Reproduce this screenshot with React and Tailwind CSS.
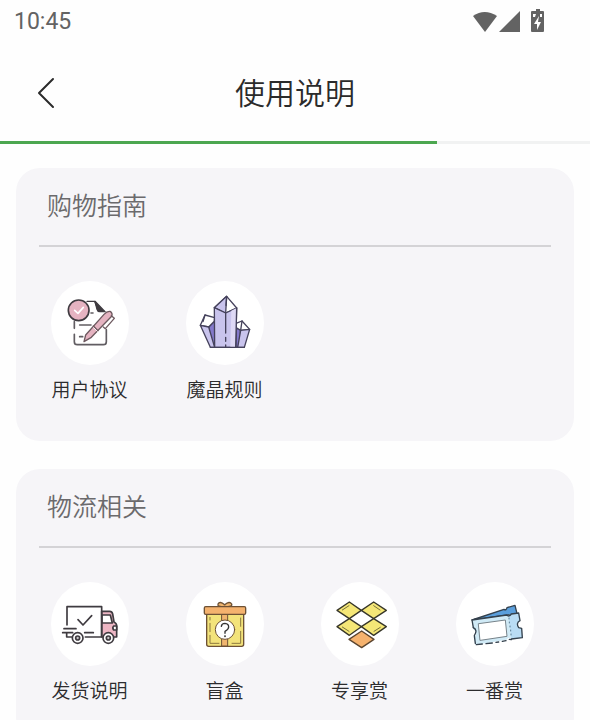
const INK = '#3f3b40';

function AgreementIcon() {
  return (
    <g fill="none" stroke={INK} strokeWidth="5" strokeLinecap="round" strokeLinejoin="round">
      <path d="M126 79h23l12 30h18" strokeWidth="4" />
      <path d="M150 79l30 31h-16q-6 0-8-7z" fill={INK} strokeWidth="4" />
      <path d="M88 140v20M88 178v22q0 9 9 9h78q9 0 9-9v-36" stroke="#615d62" />
      <path d="M138 114h6M104 150h34M104 185h9" stroke="#615d62" />
      <circle cx="101" cy="106" r="31" fill="#e5b3c1" />
      <path d="M89 106l10 9 16-18" stroke="#fff" />
      <path d="M117 200l5-20 55-62q9-10 18-9 9 5 5 15l-61 63z" fill="#e5b3c1" stroke="#6e5a60" strokeWidth="4" />
      <path d="M145 153l14 14M199 122l9 8-27 31-6-5" stroke="#6e5a60" strokeWidth="4" />
      <path d="M146 158l11 11" stroke="#f6edef" strokeWidth="3" />
    </g>
  );
}

function CrystalIcon() {
  return (
    <g stroke="#45425c" strokeWidth="4" strokeLinejoin="round" strokeLinecap="round">
      <path d="M86 156l18-18v79l-11-8zM167 165l14-12v50l-7 14h-7z" fill="#8479cb" />
      <path d="M61 151l14-31 29 8-1 11-17 17z" fill="#fff" />
      <path d="M61 151l25 5 18 61H91z" fill="#c9c4ed" />
      <path d="M168 145l18-7 23 25-27 3-14-8z" fill="#fff" />
      <path d="M182 166l27-3-16 54h-20z" fill="#c9c4ed" />
      <path d="M103 98l37-34 30 35-33 15z" fill="#fff" />
      <path d="M103 98l37-34-3 50z" fill="#c9c4ed" />
      <path d="M103 98l34 16 33-15-3 118h-63z" fill="#c9c4ed" />
      <path d="M154 107l16-8-3 118h-16z" fill="#ded9f5" stroke="none" />
      <path d="M137 114v60M137 187v12M137 210v7M140 64l-2 27M170 99l-3 118M91 217h102M75 120l-6 20M186 138l-4 28" fill="none" />
    </g>
  );
}

function TruckIcon() {
  return (
    <g fill="none" stroke={INK} strokeWidth="5" strokeLinecap="round" strokeLinejoin="round">
      <path d="M170 106h24q7 0 9 8l4 24q8 4 8 12v33h-45z" fill="#edb6c4" />
      <path d="M171 117h25l6 24h-31z" fill="#fff" />
      <path d="M66 147V92h104v91h-49M119 170h26" />
      <path d="M99 131l15 16 26-28" />
      <path d="M57 158h36M53 170h30M65 170v13h16" />
      <path d="M215 150h-9q-5 5 0 12h9z" fill="#fff" />
      <circle cx="98" cy="186" r="16" fill="#fff" />
      <circle cx="98" cy="186" r="6" fill="#c9c7c9" />
      <circle cx="190" cy="186" r="16" fill="#fff" />
      <circle cx="190" cy="186" r="6" fill="#c9c7c9" />
    </g>
  );
}

function GiftIcon() {
  return (
    <g fill="none" stroke="#6d5135" strokeWidth="4" strokeLinecap="round" strokeLinejoin="round">
      <path d="M134 91q-23 3-20-7 5-10 20 2 15-12 21-2 3 10-21 7z" fill="#f0b56f" />
      <path d="M80 114h111v91q0 6-6 6H86q-6 0-6-6z" fill="#f3e37b" />
      <path d="M126 115h17v95h-17z" fill="#f0b56f" strokeWidth="3" />
      <rect x="73" y="92" width="124" height="23" rx="4" fill="#f4b26e" />
      <path d="M90 124v8M90 142v25M90 178v24h27M182 126v25M182 166v36h-26" stroke="#8d793f" strokeWidth="3" />
      <circle cx="135" cy="161" r="29" fill="#fff" strokeWidth="3" />
      <path d="M124 151q1-9 11-9 11 1 11 11 0 7-11 13v6" stroke="#333" />
      <circle cx="135" cy="181" r="1" fill="#333" stroke="#333" />
    </g>
  );
}

function BoxesIcon() {
  return (
    <g fill="#f5e777" stroke="#373629" strokeWidth="4" strokeLinejoin="round" strokeLinecap="round">
      <path d="M66 103l37-25 36 25-36 25z" />
      <path d="M139 103l37-25 38 25-38 25z" />
      <path d="M66 152l37-24 36 24-36 26z" />
      <path d="M139 152l37-24 38 24-38 26z" />
      <path d="M102 190l38-25 37 25-37 25z" fill="#f5b26e" stroke="#5b452f" />
      <path d="M82 102l20-13M176 89l19 13M82 153l20 13M177 166l19-12" fill="none" stroke="#77703b" strokeWidth="3" />
    </g>
  );
}

function TicketIcon() {
  return (
    <g stroke="#34414d" strokeWidth="4" strokeLinejoin="round" strokeLinecap="round">
      <path d="M66 132l96-32q7 4 9-5l24-7 6 25-70 10z" fill="#5b9fdc" />
      <path d="M66 132l104-15q7 7 14-3l22-3 4 23q-13 7-4 21l9 2 2 28-33 4q-7-8-14 2l-94 16-5-23q14-9 3-21l-5-4z" fill="#d0eaf6" stroke="none" />
      <path d="M176 117l8-3 22-3 4 23q-13 7-4 21l9 2 2 28-33 4z" fill="#b9dcf4" stroke="none" />
      <path d="M70 155l-4-23 104-15q7 7 14-3l22-3 4 23q-13 7-4 21l9 2 2 28-33 4" fill="none" />
      <path d="M70 155q14 7 3 24l3 23M79 206l18-2M108 203l19-2M138 199l8-1M157 196l11-2M178 190l6 1" fill="none" />
      <path d="M86 143l80-11 5 49-80 12z" fill="#fff" stroke="#77838a" strokeWidth="3" />
      <path d="M177 126v3M178 138v3M180 150v3M182 162v3M183 174v3" fill="none" stroke="#5b7c93" strokeWidth="3" />
    </g>
  );
}

const SECTIONS = [
  {
    title: '购物指南',
    items: [
      { label: '用户协议', Icon: AgreementIcon },
      { label: '魔晶规则', Icon: CrystalIcon },
    ],
  },
  {
    title: '物流相关',
    items: [
      { label: '发货说明', Icon: TruckIcon },
      { label: '盲盒', Icon: GiftIcon },
      { label: '专享赏', Icon: BoxesIcon },
      { label: '一番赏', Icon: TicketIcon },
    ],
  },
];

function StatusBar() {
  return (
    <div className="flex h-11 items-center justify-between pl-3.5 pr-11 text-[#636363]">
      <span className="font-[Roboto] text-[23px]">10:45</span>
      <svg width="74" height="26" viewBox="0 0 74 26" fill="currentColor" aria-hidden="true">
        <path d="M1 7Q12.500-1 25 7L13 23z" />
        <path d="M48 2v21H27z" />
        <path
          fillRule="evenodd"
          d="M64 0h4v2h3q1 0 1 1v19q0 1-1 1H60q-1 0-1-1V3q0-1 1-1h4zM67 7l-5 8h3v6l4-8h-3zM61 5v3h2l1-3zM70 5h-2v3h2z"
        />
      </svg>
    </div>
  );
}

function Section({ title, items }) {
  return (
    <section className="rounded-3xl bg-[#f6f5f8] pb-10">
      <h2 className="mx-[23px] border-b-2 border-[#d4d3d6] px-2 pb-[23px] pt-[18px] text-[25px] font-[350] leading-9 text-[#6b6a6c]">
        {title}
      </h2>
      <ul className="grid grid-cols-4 pl-1.5 pr-3 pt-[34px]">
        {items.map(({ label, Icon }) => (
          <li key={label}>
            <button type="button" className="flex w-full flex-col items-center gap-[11px]">
              <span className="rounded-[50%] bg-white">
                <svg className="block" width="78" height="84" viewBox="18 18 234 252" aria-hidden="true">
                  <Icon />
                </svg>
              </span>
              <span className="text-[19px] font-[350] leading-[25px] text-[#2c2c2e]">{label}</span>
            </button>
          </li>
        ))}
      </ul>
    </section>
  );
}

export default function App() {
  return (
    <div className="bg-[#fefefe] font-['Noto_Sans_CJK_SC',sans-serif]">
      <StatusBar />
      <header className="grid h-[97px] grid-cols-[64px_1fr_64px] items-center">
        <button type="button" aria-label="返回" className="flex h-16 items-center justify-end pr-2">
          <svg width="20" height="32" viewBox="0 0 20 32" fill="none" stroke="#2b2b2b" strokeWidth="2" strokeLinecap="round" strokeLinejoin="round">
            <path d="M17 2L3 16l14 14" />
          </svg>
        </button>
        <h1 className="pb-1 text-center text-3xl font-[350] text-[#2b2b2b]">使用说明</h1>
      </header>
      <div className="h-[3px] bg-[#f1f2f2]">
        <div className="h-full w-[74%] bg-[#4ca750]" />
      </div>
      <main className="flex flex-col gap-7 px-4 py-6">
        {SECTIONS.map(s => (
          <Section key={s.title} title={s.title} items={s.items} />
        ))}
      </main>
    </div>
  );
}
